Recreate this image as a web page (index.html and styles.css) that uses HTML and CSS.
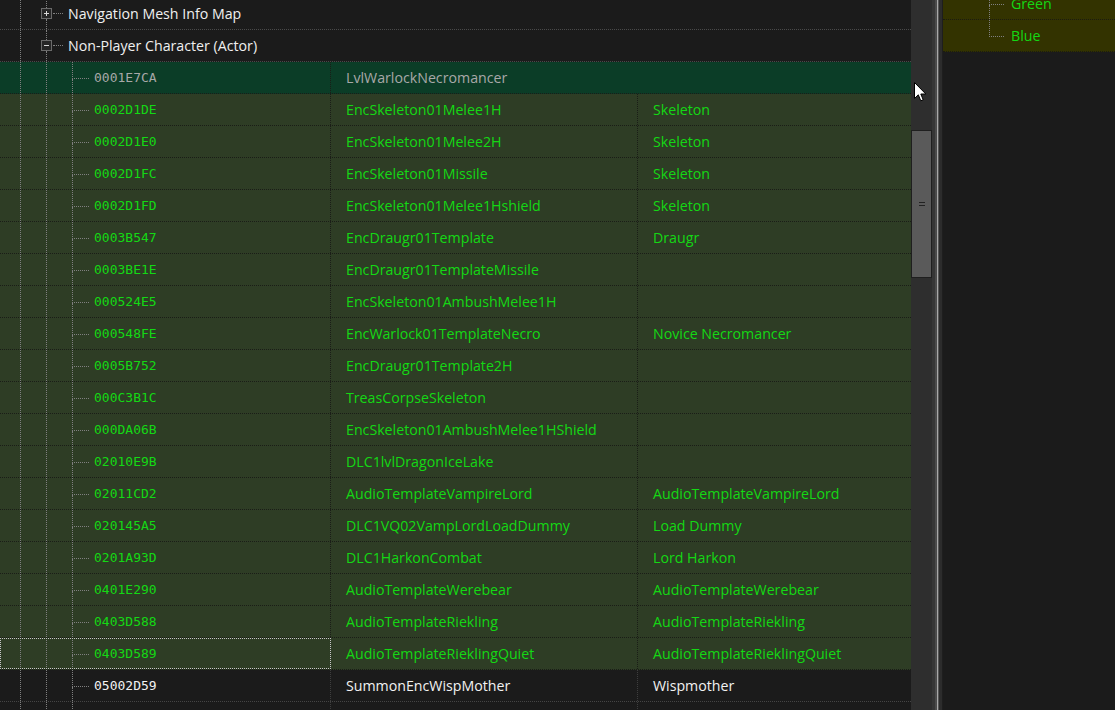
FILE: index.html
```html
<!DOCTYPE html>
<html>
<head>
<meta charset="utf-8">
<link rel="stylesheet" href="styles.css">
</head>
<body>
<div class="app">
  <div class="pane-left">
    <div class="list">
      <div class="row cat">
        <div class="cell cfull">
          <span class="ind"></span>
          <span class="exp"><span class="up"></span><span class="mid"><span class="box plus"></span><span class="h"></span></span><span class="down"></span></span>
          <span class="label">Navigation Mesh Info Map</span>
        </div>
      </div>
      <div class="row cat">
        <div class="cell cfull">
          <span class="ind"></span>
          <span class="exp"><span class="up"></span><span class="mid"><span class="box minus"></span><span class="h"></span></span><span class="down"></span></span>
          <span class="label">Non-Player Character (Actor)</span>
        </div>
      </div>

      <div class="row rec sel">
        <div class="cell c1"><span class="ind"></span><span class="ind"></span><span class="conn"><span class="up"></span><span class="down"></span></span><span class="id">0001E7CA</span></div>
        <div class="cell c2">LvlWarlockNecromancer</div>
        <div class="cell c3"></div>
      </div>
      <div class="row rec">
        <div class="cell c1"><span class="ind"></span><span class="ind"></span><span class="conn"><span class="up"></span><span class="down"></span></span><span class="id">0002D1DE</span></div>
        <div class="cell c2">EncSkeleton01Melee1H</div>
        <div class="cell c3">Skeleton</div>
      </div>
      <div class="row rec">
        <div class="cell c1"><span class="ind"></span><span class="ind"></span><span class="conn"><span class="up"></span><span class="down"></span></span><span class="id">0002D1E0</span></div>
        <div class="cell c2">EncSkeleton01Melee2H</div>
        <div class="cell c3">Skeleton</div>
      </div>
      <div class="row rec">
        <div class="cell c1"><span class="ind"></span><span class="ind"></span><span class="conn"><span class="up"></span><span class="down"></span></span><span class="id">0002D1FC</span></div>
        <div class="cell c2">EncSkeleton01Missile</div>
        <div class="cell c3">Skeleton</div>
      </div>
      <div class="row rec">
        <div class="cell c1"><span class="ind"></span><span class="ind"></span><span class="conn"><span class="up"></span><span class="down"></span></span><span class="id">0002D1FD</span></div>
        <div class="cell c2">EncSkeleton01Melee1Hshield</div>
        <div class="cell c3">Skeleton</div>
      </div>
      <div class="row rec">
        <div class="cell c1"><span class="ind"></span><span class="ind"></span><span class="conn"><span class="up"></span><span class="down"></span></span><span class="id">0003B547</span></div>
        <div class="cell c2">EncDraugr01Template</div>
        <div class="cell c3">Draugr</div>
      </div>
      <div class="row rec">
        <div class="cell c1"><span class="ind"></span><span class="ind"></span><span class="conn"><span class="up"></span><span class="down"></span></span><span class="id">0003BE1E</span></div>
        <div class="cell c2">EncDraugr01TemplateMissile</div>
        <div class="cell c3"></div>
      </div>
      <div class="row rec">
        <div class="cell c1"><span class="ind"></span><span class="ind"></span><span class="conn"><span class="up"></span><span class="down"></span></span><span class="id">000524E5</span></div>
        <div class="cell c2">EncSkeleton01AmbushMelee1H</div>
        <div class="cell c3"></div>
      </div>
      <div class="row rec">
        <div class="cell c1"><span class="ind"></span><span class="ind"></span><span class="conn"><span class="up"></span><span class="down"></span></span><span class="id">000548FE</span></div>
        <div class="cell c2">EncWarlock01TemplateNecro</div>
        <div class="cell c3">Novice Necromancer</div>
      </div>
      <div class="row rec">
        <div class="cell c1"><span class="ind"></span><span class="ind"></span><span class="conn"><span class="up"></span><span class="down"></span></span><span class="id">0005B752</span></div>
        <div class="cell c2">EncDraugr01Template2H</div>
        <div class="cell c3"></div>
      </div>
      <div class="row rec">
        <div class="cell c1"><span class="ind"></span><span class="ind"></span><span class="conn"><span class="up"></span><span class="down"></span></span><span class="id">000C3B1C</span></div>
        <div class="cell c2">TreasCorpseSkeleton</div>
        <div class="cell c3"></div>
      </div>
      <div class="row rec">
        <div class="cell c1"><span class="ind"></span><span class="ind"></span><span class="conn"><span class="up"></span><span class="down"></span></span><span class="id">000DA06B</span></div>
        <div class="cell c2">EncSkeleton01AmbushMelee1HShield</div>
        <div class="cell c3"></div>
      </div>
      <div class="row rec">
        <div class="cell c1"><span class="ind"></span><span class="ind"></span><span class="conn"><span class="up"></span><span class="down"></span></span><span class="id">02010E9B</span></div>
        <div class="cell c2">DLC1lvlDragonIceLake</div>
        <div class="cell c3"></div>
      </div>
      <div class="row rec">
        <div class="cell c1"><span class="ind"></span><span class="ind"></span><span class="conn"><span class="up"></span><span class="down"></span></span><span class="id">02011CD2</span></div>
        <div class="cell c2">AudioTemplateVampireLord</div>
        <div class="cell c3">AudioTemplateVampireLord</div>
      </div>
      <div class="row rec">
        <div class="cell c1"><span class="ind"></span><span class="ind"></span><span class="conn"><span class="up"></span><span class="down"></span></span><span class="id">020145A5</span></div>
        <div class="cell c2">DLC1VQ02VampLordLoadDummy</div>
        <div class="cell c3">Load Dummy</div>
      </div>
      <div class="row rec">
        <div class="cell c1"><span class="ind"></span><span class="ind"></span><span class="conn"><span class="up"></span><span class="down"></span></span><span class="id">0201A93D</span></div>
        <div class="cell c2">DLC1HarkonCombat</div>
        <div class="cell c3">Lord Harkon</div>
      </div>
      <div class="row rec">
        <div class="cell c1"><span class="ind"></span><span class="ind"></span><span class="conn"><span class="up"></span><span class="down"></span></span><span class="id">0401E290</span></div>
        <div class="cell c2">AudioTemplateWerebear</div>
        <div class="cell c3">AudioTemplateWerebear</div>
      </div>
      <div class="row rec">
        <div class="cell c1"><span class="ind"></span><span class="ind"></span><span class="conn"><span class="up"></span><span class="down"></span></span><span class="id">0403D588</span></div>
        <div class="cell c2">AudioTemplateRiekling</div>
        <div class="cell c3">AudioTemplateRiekling</div>
      </div>
      <div class="row rec">
        <div class="cell c1 focus"><span class="ind"></span><span class="ind"></span><span class="conn"><span class="up"></span><span class="down"></span></span><span class="id">0403D589</span></div>
        <div class="cell c2">AudioTemplateRieklingQuiet</div>
        <div class="cell c3">AudioTemplateRieklingQuiet</div>
      </div>
      <div class="row plain">
        <div class="cell c1"><span class="ind"></span><span class="ind"></span><span class="conn"><span class="up"></span><span class="down"></span></span><span class="id">05002D59</span></div>
        <div class="cell c2">SummonEncWispMother</div>
        <div class="cell c3">Wispmother</div>
      </div>
      <div class="row plain">
        <div class="cell c1"><span class="ind"></span><span class="ind"></span><span class="conn"><span class="up"></span><span class="down"></span></span><span class="id"></span></div>
        <div class="cell c2"></div>
        <div class="cell c3"></div>
      </div>
    </div>
  </div>

  <div class="vscroll">
    <div class="thumb"><span class="grip"></span></div>
  </div>
  <div class="splitter"></div>

  <div class="pane-right">
    <div class="rlist">
      <div class="rrow">
        <span class="conn"><span class="up"></span><span class="down"></span></span>
        <span class="rlabel">Green</span>
      </div>
      <div class="rrow">
        <span class="conn last"><span class="up"></span><span class="down"></span></span>
        <span class="rlabel">Blue</span>
      </div>
    </div>
  </div>

  <svg class="cursor" width="13" height="21" viewBox="0 0 13 21">
    <path d="M0.5 0.5 L0.5 16.5 L4.3 12.8 L6.8 18.8 L9.2 17.8 L6.8 12 L11.8 12 Z" fill="#ffffff" stroke="#000000" stroke-width="1" stroke-linejoin="miter"/>
  </svg>
</div>
</body>
</html>
```

FILE: styles.css
```css
* { box-sizing: border-box; }
html, body { margin: 0; padding: 0; }
body {
  background: #1b1b1b;
  font-family: "Open Sans", "Noto Sans", sans-serif;
  font-size: 14.2px;
  color: #f0f0f0;
  overflow: hidden;
}
.app {
  position: relative;
  display: flex;
  width: 1115px;
  height: 710px;
  overflow: hidden;
}

/* left tree/table */
.pane-left {
  width: 911px;
  flex: none;
  overflow: hidden;
  background: #1b1b1b;
}
.list { margin-top: -2px; }
.row {
  display: flex;
  height: 32px;
  border-bottom: 1px dotted #4a4a4a;
}
.row.rec {
  background: #2e3d25;
  border-bottom-color: #1a1d17;
  color: #14d814;
}
.row.sel {
  background: #0b3d27;
  color: #a8a8a8;
}
.row.plain {
  background: #1b1b1b;
  border-bottom-color: #454545;
  color: #f2f2f2;
}
.cell {
  display: flex;
  align-items: center;
  white-space: nowrap;
}
.cfull { flex: 1; padding-left: 7px; }
.c1 {
  width: 331px;
  padding-left: 7px;
  border-right: 1px dotted #1a1d17;
}
.c2 {
  width: 307px;
  padding-left: 15px;
  border-right: 1px dotted #1a1d17;
}
.c3 { flex: 1; padding-left: 15px; }
.sel .c2 { border-right-color: transparent; }
.plain .c1, .plain .c2 { border-right-color: #3e3e3e; }
.focus { outline: 1px dotted #c8c8c8; outline-offset: -1px; }

/* tree lines */
.ind {
  align-self: stretch;
  width: 13px;
  margin-left: 13px;
  border-left: 1px dotted #808080;
}
.exp, .conn {
  align-self: stretch;
  width: 30px;
  display: flex;
  flex-direction: column;
}
.exp .up, .exp .down {
  flex: 1;
  margin-left: 13px;
  border-left: 1px dotted #808080;
}
.exp .mid {
  height: 11px;
  display: flex;
  align-items: center;
}
.box {
  width: 11px;
  height: 11px;
  margin-left: 8px;
  border: 1px solid #6a6a6a;
  flex: none;
}
.box.plus {
  background:
    linear-gradient(#d8d8d8, #d8d8d8) center / 5px 1px no-repeat,
    linear-gradient(#d8d8d8, #d8d8d8) center / 1px 5px no-repeat,
    #262626;
}
.box.minus {
  background:
    linear-gradient(#d8d8d8, #d8d8d8) center / 5px 1px no-repeat,
    #262626;
}
.exp .h {
  flex: 1;
  margin-left: 1px;
  border-top: 1px dotted #808080;
}
.conn .up {
  height: 17px;
  margin-left: 13px;
  border-left: 1px dotted #808080;
  border-bottom: 1px dotted #808080;
}
.conn .down {
  flex: 1;
  margin-left: 13px;
  border-left: 1px dotted #808080;
}
.conn.last .down { border-left-color: transparent; }
.label { margin-left: 5px; }
.id {
  margin-left: 5px;
  font-family: "DejaVu Sans Mono", "Liberation Mono", monospace;
  font-size: 13px;
}

/* scrollbar & splitter */
.vscroll {
  width: 21px;
  flex: none;
  background: #2e2e2e;
  padding-top: 130px;
}
.thumb {
  height: 148px;
  background: #5a5a5a;
  border: 1px solid #1f1f1f;
  display: flex;
  align-items: center;
  justify-content: center;
}
.grip {
  width: 6px;
  height: 4px;
  border-top: 1px solid #222;
  border-bottom: 1px solid #222;
}
.splitter {
  width: 11px;
  flex: none;
  background: linear-gradient(to right,
    #363636 0 3px, #4a4a4a 3px 5px, #a8a8a8 5px 6px, #565656 6px 7px,
    #2c2c2c 7px 10px, #1e1e1e 10px 11px);
}

/* right pane */
.pane-right {
  flex: 1;
  background: #1b1b1b;
  overflow: hidden;
}
.rlist { margin-top: -12px; }
.rrow {
  display: flex;
  height: 32px;
  padding-left: 33px;
  background: #333300;
  border-bottom: 1px dotted #1c1c10;
  color: #14d814;
  align-items: center;
}
.rrow .conn { width: 28px; }
.rlabel { margin-left: 7px; }

.cursor {
  position: absolute;
  left: 914px;
  top: 82px;
}
```
